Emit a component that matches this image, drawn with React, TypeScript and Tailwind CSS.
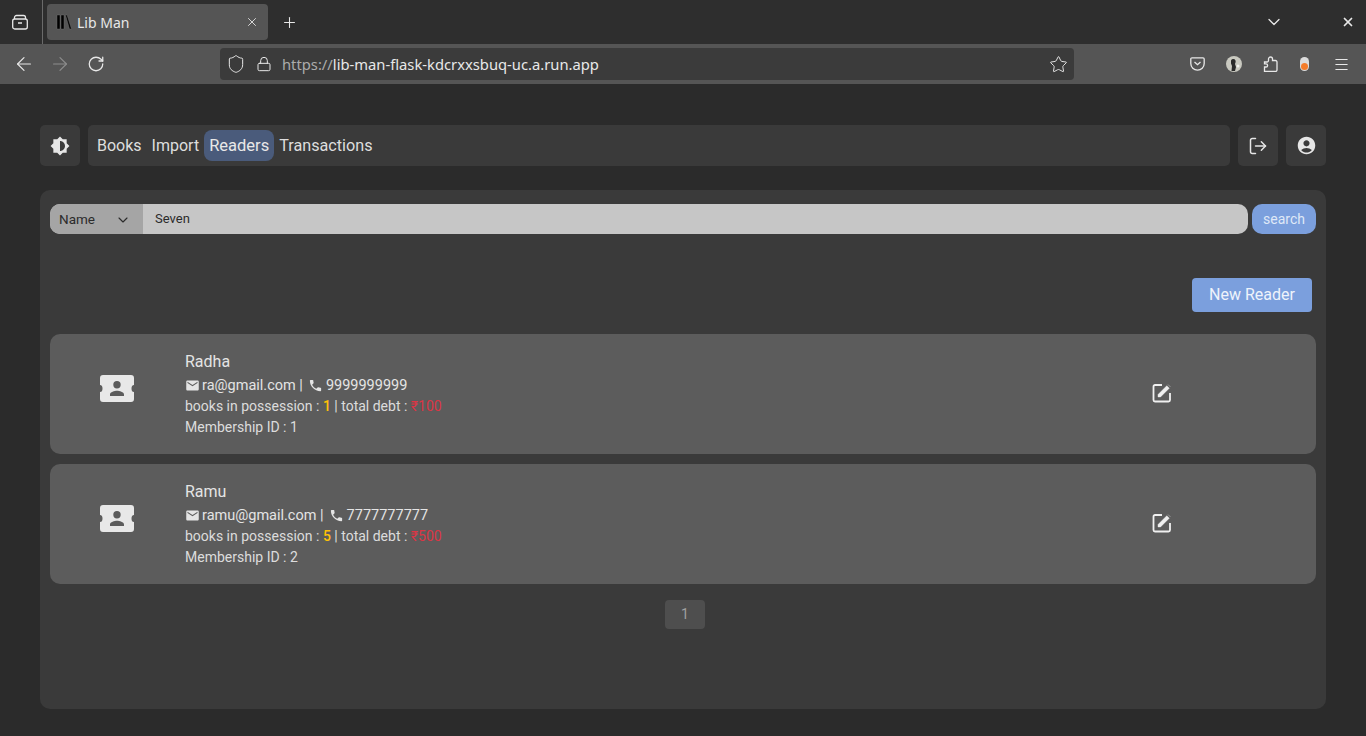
import React from 'react';
import { MdEmail, MdPhone, MdAccountCircle } from 'react-icons/md';
import { Shield, Lock, Star, ArrowLeft, ArrowRight, RotateCw, Plus, X, ChevronDown, Menu, LogOut } from 'lucide-react';

const chromeFont = { fontFamily: '"Noto Sans", sans-serif' };

const BrightnessIcon = () => (
    <svg width="20" height="20" viewBox="0 0 24 24" fill="currentColor">
        <path d="M20 15.31 23.31 12 20 8.69V4h-4.69L12 .69 8.69 4H4v4.69L.69 12 4 15.31V20h4.69L12 23.31 15.31 20H20v-4.69zM12 18V6c3.31 0 6 2.69 6 6s-2.69 6-6 6z" />
    </svg>
);

const ReaderCardIcon = () => (
    <svg width="34" height="27" viewBox="0 0 34 27" fill="currentColor">
        <path fillRule="evenodd" d="M3 0h28a3 3 0 0 1 3 3v7a2.500 3.500 0 0 0 0 7v7a3 3 0 0 1-3 3H3a3 3 0 0 1-3-3v-7a2.500 3.500 0 0 0 0-7V3a3 3 0 0 1 3-3zm14 6a3.700 3.700 0 1 0 0 7.400A3.700 3.700 0 0 0 17 6zM10 21h14v-1.600c0-2.400-4.600-3.700-7-3.700s-7 1.300-7 3.700V21z" />
    </svg>
);

const EditIcon = () => (
    <svg width="20" height="20" viewBox="0 0 20 20" fill="none">
        <path d="M10 2H3a1.500 1.500 0 0 0-1.500 1.500V17A1.500 1.500 0 0 0 3 18.500h13.500A1.500 1.500 0 0 0 18 17v-7" stroke="currentColor" strokeWidth="1.800" />
        <path d="M6 14v-2.500L14.800 2.700l2.500 2.500L8.500 14H6zM16 1.500l2.500 2.500" fill="currentColor" stroke="currentColor" strokeWidth="0.400" />
    </svg>
);

const BrowserChrome = () => (
    <div style={chromeFont} className="text-[#e8e8e8]">
        <div className="flex h-[44px] items-stretch bg-[#2e2e2e]">
            <div className="flex w-[43px] items-center justify-center border-r border-[#6a6a6a] pr-[2px]">
                <svg width="16" height="16" viewBox="0 0 16 16" fill="none" stroke="currentColor" strokeWidth="1.300">
                    <rect x="0.700" y="5" width="14.600" height="10" rx="2" />
                    <path d="M2.500 5V3.500a2 2 0 0 1 2-2h7a2 2 0 0 1 2 2V5M6 9h4" />
                </svg>
            </div>
            <div className="ml-[4px] mt-[4px] flex h-[36px] w-[221px] items-center rounded-[4px] bg-[#555555] pl-[9px] pr-[9px]">
                <svg width="16" height="16" viewBox="0 0 16 16" className="shrink-0">
                    <path d="M1 1h3v14H1zM5 1h3v14H5zM9.500 1h1.500l4.500 14h-2z" fill="#000" stroke="#777" strokeWidth="0.400" />
                </svg>
                <span className="ml-[5px] text-[14px]">Lib Man</span>
                <X size={14} className="ml-auto" strokeWidth={1.500} />
            </div>
            <div className="ml-[13px] flex items-center">
                <Plus size={17} strokeWidth={1.500} />
            </div>
            <div className="ml-auto flex items-center">
                <ChevronDown size={20} strokeWidth={1.500} />
                <X size={14} strokeWidth={3} className="ml-[57px] mr-[11px]" />
            </div>
        </div>
        <div className="flex h-[40px] items-center bg-[#555555]">
            <ArrowLeft size={22} strokeWidth={1.300} className="ml-[13px]" />
            <ArrowRight size={22} strokeWidth={1.300} className="ml-[14px] text-[#8d8d8d]" />
            <RotateCw size={18} strokeWidth={1.700} className="ml-[16px]" />
            <div className="ml-[115px] flex h-[32px] w-[854px] items-center rounded-[4px] bg-[#3b3b3b] pl-[6px] pr-[6px]">
                <Shield size={20} strokeWidth={1.200} />
                <Lock size={16} strokeWidth={1.500} className="ml-[10px]" />
                <span className="ml-[10px] text-[14.750px] text-[#e8e8e8]">
                    <span className="text-[#ababab]">https://</span>lib-man-flask-kdcrxxsbuq-uc.a.run.app
                </span>
                <Star size={19} strokeWidth={1.200} className="ml-auto" />
            </div>
            <div className="ml-[116px] flex items-center">
                <svg width="15" height="14" viewBox="0 0 15 14" fill="none" stroke="currentColor" strokeWidth="1.300">
                    <path d="M2 .8h11a1.200 1.200 0 0 1 1.200 1.200v4.500a6.700 6.700 0 0 1-13.400 0V2A1.200 1.200 0 0 1 2 .8z" />
                    <path d="M4.500 5l3 2.700 3-2.700" />
                </svg>
                <svg width="16" height="16" viewBox="0 0 16 16" className="ml-[21px]">
                    <circle cx="8" cy="8" r="8" fill="#c9c9c0" />
                    <path d="M5 4.500a2.500 2.500 0 0 1 4.500 0c.5 1.500-.3 2.500-.5 3.500l1 3-1 4H5.500l.5-5-1-2.500z" fill="#2a2a2a" />
                    <circle cx="12" cy="10" r="1.500" fill="#f2f2ee" />
                </svg>
                <svg width="15" height="16" viewBox="0 0 15 16" fill="none" stroke="currentColor" strokeWidth="1.300" className="ml-[21px]">
                    <path d="M5.500 3.500V3a2 2 0 0 1 4 0v1.500h3a1.500 1.500 0 0 1 1.500 1.500v8a1.500 1.500 0 0 1-1.500 1.500H1.500V11H3a1.600 1.600 0 0 0 0-3.200H1.500V6h2.500a1.500 1.500 0 0 0 1.500-1.500z" />
                </svg>
                <div className="ml-[22px] flex h-[14px] w-[9px] items-end justify-center rounded-full bg-[#dcdcdc]">
                    <div className="mb-[1px] h-[7px] w-[7px] rounded-full bg-[#f57c2a]" />
                </div>
                <Menu size={17} strokeWidth={1.500} className="ml-[24px]" />
            </div>
        </div>
    </div>
);

const NavBox: React.FC<{ children: React.ReactNode }> = ({ children }) => (
    <button className="flex h-[41px] w-[40px] shrink-0 items-center justify-center rounded-[5px] bg-[#3a3a3a] text-[#e6e6e6]">
        {children}
    </button>
);

interface Reader {
    name: string;
    email: string;
    phone: string;
    books: number;
    debt: number;
    id: number;
}

const readers: Reader[] = [
    { name: 'Radha', email: 'ra@gmail.com', phone: '9999999999', books: 1, debt: 100, id: 1 },
    { name: 'Ramu', email: 'ramu@gmail.com', phone: '7777777777', books: 5, debt: 500, id: 2 },
];

const ReaderRow: React.FC<{ reader: Reader }> = ({ reader }) => (
    <div className="flex h-[120px] items-center rounded-[10px] bg-[#5c5c5c] text-[#e4e4e4]">
        <div className="flex w-[133px] shrink-0 justify-center pb-[11px] text-[#e8e8e8]">
            <ReaderCardIcon />
        </div>
        <div className="ml-[2px] flex-1 pb-[1px]">
            <div className="mb-[2px] text-[16px] leading-[23px]">{reader.name}</div>
            <div className="flex items-center text-[14.500px] leading-[21px]">
                <MdEmail size={15} className="mr-[2px]" />
                {reader.email} |
                <MdPhone size={15} className="ml-[5px] mr-[3px]" />
                {reader.phone}
            </div>
            <div className="text-[14px] leading-[21px] text-[#dcdcdc]">
                books in possession : <span className="font-medium text-[#ffc107]">{reader.books}</span> | total debt : <span className="text-[#dc3545]">₹{reader.debt}</span>
            </div>
            <div className="text-[14px] leading-[21px] text-[#dcdcdc]">Membership ID : {reader.id}</div>
        </div>
        <div className="mr-[144px] mt-[-2px] text-[#f0f0f0]">
            <EditIcon />
        </div>
    </div>
);

export default function App() {
    return (
        <div style={{ fontFamily: 'Roboto, sans-serif' }} className="h-[736px] overflow-hidden bg-[#2b2b2b]">
            <BrowserChrome />
            <div className="px-[40px] pt-[41px]">
                <div className="flex gap-[8px]">
                    <NavBox><BrightnessIcon /></NavBox>
                    <nav className="flex h-[41px] flex-1 items-center rounded-[5px] bg-[#3a3a3a] pl-[4px] text-[16px] leading-[21px] text-[#dedede]">
                        <a className="px-[5px] py-[5px]">Books</a>
                        <a className="px-[5px] py-[5px]">Import</a>
                        <a className="rounded-[8px] bg-[#4a5b7b] px-[5px] py-[5px] text-[16.500px] text-[#e8e8e8]">Readers</a>
                        <a className="px-[5px] py-[5px] text-[16.200px]">Transactions</a>
                    </nav>
                    <NavBox><LogOut size={20} strokeWidth={1.800} /></NavBox>
                    <NavBox><MdAccountCircle size={21} /></NavBox>
                </div>

                <main className="mt-[24px] h-[519px] rounded-[10px] bg-[#3a3a3a] px-[10px] pt-[14px]">
                    <div className="flex gap-[4px]">
                        <div className="flex h-[30px] flex-1 overflow-hidden rounded-[10px] bg-[#c6c6c6] text-[#2b2b2b]">
                            <div className="flex w-[93px] items-center bg-[#a5a5a5] pl-[9px] pt-[1px] text-[13.500px]">
                                Name
                                <ChevronDown size={16} strokeWidth={1.700} className="ml-[20px]" />
                            </div>
                            <div className="flex items-center pb-[1px] pl-[12px] text-[13px]">Seven</div>
                        </div>
                        <button className="h-[30px] w-[64px] rounded-[10px] bg-[#7b9fdd] text-[14px] text-[#dfe8f7]">search</button>
                    </div>

                    <div className="mt-[44px] flex justify-end pr-[4px]">
                        <button className="h-[34px] w-[120px] rounded-[4px] bg-[#7b9fdd] text-[16px] text-[#eef3fb]">New Reader</button>
                    </div>

                    <div className="mt-[22px] flex flex-col gap-[10px]">
                        {readers.map(reader => (
                            <ReaderRow key={reader.id} reader={reader} />
                        ))}
                    </div>

                    <div className="mt-[16px] flex justify-center pl-[4px]">
                        <div className="flex h-[29px] w-[40px] items-center justify-center rounded-[4px] bg-[#4e4e4e] text-[14px] text-[#a0a0a0]">1</div>
                    </div>
                </main>
            </div>
        </div>
    );
}
